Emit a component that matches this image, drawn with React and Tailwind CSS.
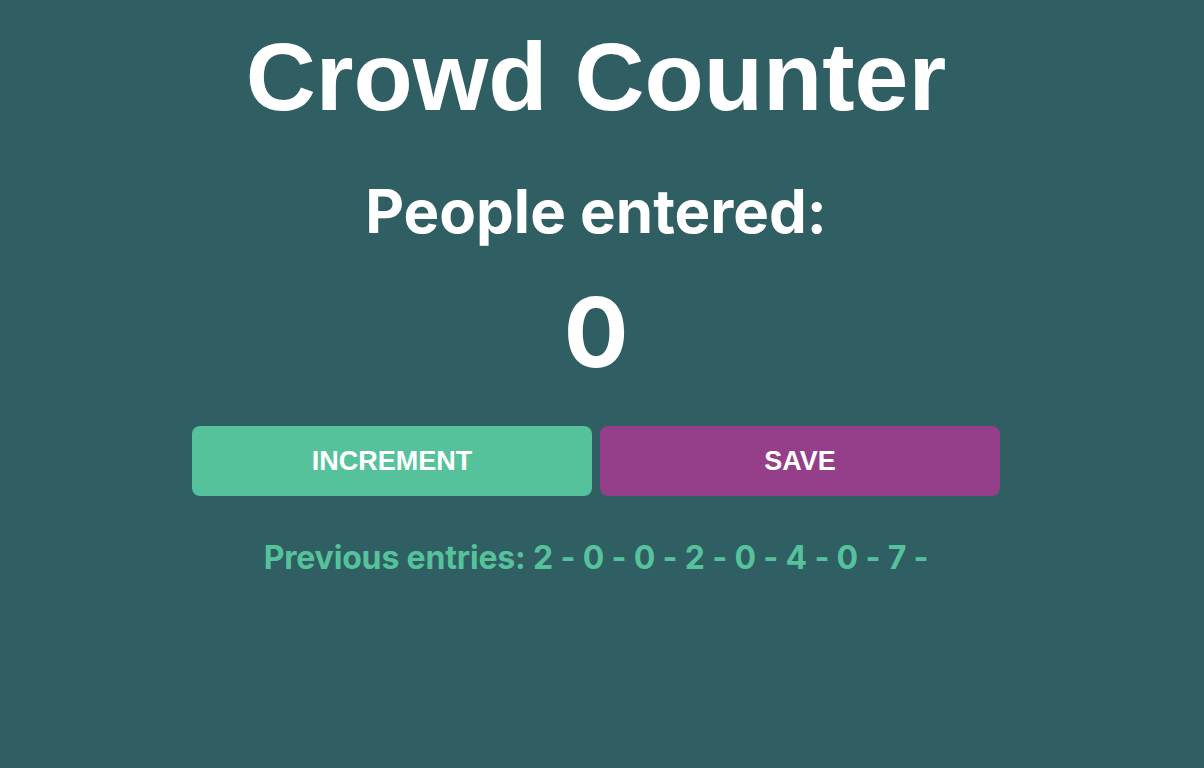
import React, { useState } from 'react';

const App = () => {
  const [count, setCount] = useState(0);
  const [entries, setEntries] = useState([2, 0, 0, 2, 0, 4, 0, 7]);

  // Bump the counter by one
  const increment = () => setCount(count + 1);

  // Store current count and reset
  const save = () => {
    setEntries([...entries, count]);
    setCount(0);
  };

  return (
    <div className="min-h-screen bg-[#2f5e63] flex flex-col items-center pr-3">
      <h1 className="mt-[28px] text-[97px] leading-none font-bold text-white font-['Liberation_Sans',Arial,sans-serif]">
        Crowd Counter
      </h1>

      <h2 className="mt-[56px] text-[60px] leading-none font-bold text-white font-['Inter',sans-serif]">
        People entered:
      </h2>

      <p className="mt-[43px] text-[96px] leading-none font-bold text-white font-['Inter',sans-serif]">
        {count}
      </p>

      <div className="mt-[46px] flex gap-2">
        <button
          onClick={increment}
          className="w-[400px] h-[70px] rounded-lg bg-[#56c29b] text-white text-[27px] font-bold font-['Liberation_Sans',Arial,sans-serif]"
        >
          INCREMENT
        </button>
        <button
          onClick={save}
          className="w-[400px] h-[70px] rounded-lg bg-[#953f8a] text-white text-[27px] font-bold font-['Liberation_Sans',Arial,sans-serif]"
        >
          SAVE
        </button>
      </div>

      <p className="mt-[46px] text-[32px] leading-none font-bold text-[#56c29b] tracking-[-0.005em] font-['Inter',sans-serif]">
        Previous entries: {entries.map(e => `${e} - `).join('')}
      </p>
    </div>
  );
};

export default App;
